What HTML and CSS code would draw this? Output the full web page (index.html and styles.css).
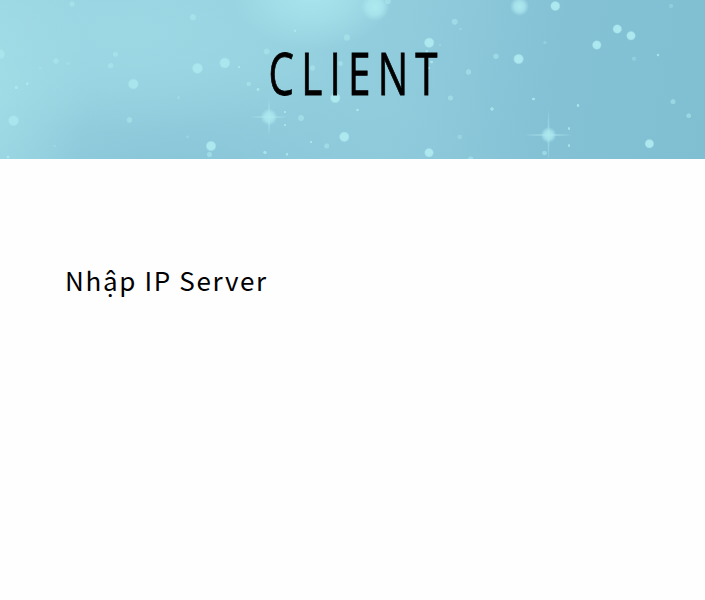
FILE: index.html
```html
<!DOCTYPE html>
<html lang="vi">
<head>
<meta charset="utf-8">
<title>Client</title>
<link rel="stylesheet" href="styles.css">
</head>
<body>
<header class="banner">
<svg class="sky" viewBox="0 0 705 159" aria-hidden="true">
  <defs>
    <radialGradient id="glow"><stop offset="0" stop-color="#ade9ef"/><stop offset=".55" stop-color="#ade9ef" stop-opacity=".75"/><stop offset="1" stop-color="#ade9ef" stop-opacity="0"/></radialGradient>
    <radialGradient id="dot"><stop offset="0" stop-color="#ade9ef"/><stop offset=".72" stop-color="#ade9ef" stop-opacity=".95"/><stop offset="1" stop-color="#ade9ef" stop-opacity="0"/></radialGradient>
    <radialGradient id="haze"><stop offset="0" stop-color="#a8e5ed"/><stop offset=".5" stop-color="#a8e5ed" stop-opacity=".6"/><stop offset="1" stop-color="#a8e5ed" stop-opacity="0"/></radialGradient>
  </defs>
  <ellipse cx="313" cy="-8" rx="82" ry="58" fill="url(#haze)"/>
  <g fill="url(#glow)">
    <circle cx="375" cy="7" r="14"/><circle cx="519.500" cy="6.500" r="9.500"/>
    <circle cx="269" cy="117" r="8.500"/><circle cx="548.500" cy="135" r="8"/>
  </g>
  <g fill="url(#glow)" opacity=".5">
    <ellipse cx="269" cy="117" rx="21" ry="1.300"/><ellipse cx="269" cy="117" rx="1.300" ry="21"/>
    <ellipse cx="548.500" cy="135" rx="26" ry="1.400"/><ellipse cx="548.500" cy="135" rx="1.400" ry="27"/>
  </g>
  <g fill="url(#dot)">
    <circle cx="0" cy="54" r="5.500" opacity=".7"/><circle cx="133.300" cy="84" r="5.700" opacity=".85"/>
    <circle cx="13.500" cy="120.700" r="5.800" opacity=".8"/><circle cx="197.500" cy="68.300" r="5.800" opacity=".9"/>
    <circle cx="224.800" cy="63" r="5.800" opacity=".9"/><circle cx="211" cy="146" r="5.500"/><circle cx="209.500" cy="154.500" r="3" opacity=".6"/>
    <circle cx="429.200" cy="42.700" r="5.500"/><circle cx="335.300" cy="98" r="5.500"/>
    <circle cx="344.300" cy="136.800" r="5.500"/><circle cx="429" cy="152.700" r="5"/>
    <circle cx="518.600" cy="59" r="5.500"/><circle cx="555.300" cy="6" r="5.300"/>
    <circle cx="617.300" cy="29" r="5"/><circle cx="631" cy="35.700" r="5"/><circle cx="596.800" cy="45" r="5"/><circle cx="649.400" cy="143.700" r="5"/>
  </g>
  <g fill="url(#dot)" opacity=".58">
    <circle cx="72" cy="4" r="3"/><circle cx="193" cy="17.300" r="3.700"/><circle cx="115.500" cy="54.300" r="3"/><circle cx="110.700" cy="65.700" r="3.200"/>
    <circle cx="56" cy="61" r="3.200"/><circle cx="129.500" cy="120" r="3.300"/><circle cx="388" cy="1.500" r="3.200"/>
    <circle cx="347" cy="37.500" r="3.700"/><circle cx="266.700" cy="51.500" r="3.500"/><circle cx="454.700" cy="21.700" r="3.500"/>
    <circle cx="312.500" cy="68" r="3.200"/><circle cx="340.500" cy="63.500" r="2.700"/><circle cx="248.700" cy="84" r="2.700"/>
    <circle cx="301" cy="118" r="3.500"/><circle cx="326.700" cy="146" r="3"/><circle cx="468.500" cy="72" r="3.200"/><circle cx="496" cy="56.300" r="3.200"/>
    <circle cx="450.500" cy="98" r="3"/><circle cx="459.700" cy="137" r="2.700" opacity=".7"/><circle cx="470.700" cy="159" r="3"/>
    <circle cx="544.500" cy="153" r="2.700"/><circle cx="671" cy="6" r="2.500" opacity=".6"/><circle cx="634" cy="58.700" r="2.500" opacity=".6"/>
    <circle cx="673" cy="101.700" r="3"/><circle cx="688.700" cy="115.700" r="2.800"/><circle cx="545" cy="42.700" r="2" opacity=".6"/>
    <circle cx="68" cy="63.500" r="2" opacity=".6"/><circle cx="40.500" cy="68" r="1.800" opacity=".6"/><circle cx="178.500" cy="97.700" r="2" opacity=".6"/>
    <circle cx="187.500" cy="136.700" r="1.600" opacity=".6"/><circle cx="54.500" cy="146" r="1.600" opacity=".6"/>
    <circle cx="460.500" cy="29" r="1.600" opacity=".6"/><circle cx="440" cy="45" r="1.600" opacity=".6"/>
  </g>
  <g fill="url(#dot)" opacity=".85">
    <circle cx="16.300" cy="87.500" r="2"/><circle cx="27.300" cy="83.700" r="1.700"/><circle cx="8" cy="157" r="1.800"/>
    <circle cx="239" cy="67" r="1.300"/><circle cx="295" cy="30.700" r="1.600"/><circle cx="258" cy="89.500" r="1.800"/>
    <circle cx="285" cy="112" r="1.600"/><circle cx="285" cy="125" r="1.600"/><circle cx="357.500" cy="110" r="1.600"/>
    <circle cx="311" cy="142" r="1.500"/><circle cx="265" cy="152.500" r="2"/><circle cx="287" cy="154.300" r="1.600"/>
    <circle cx="426.700" cy="51.300" r="1.500"/><circle cx="431.500" cy="62" r="1.700"/><circle cx="429" cy="68" r="1.600"/>
    <circle cx="492" cy="109" r="2"/><circle cx="533.500" cy="99" r="1.700"/><circle cx="578" cy="105.500" r="1.700"/>
    <circle cx="569" cy="128.500" r="1.500"/><circle cx="569" cy="145.500" r="1.500"/><circle cx="658" cy="55" r="1.700"/>
  </g>
</svg>
<h1 class="title">CLIENT</h1>
</header>
<main class="content">
<p class="label">Nhập IP Server</p>
</main>
</body>
</html>
```
FILE: styles.css
```css
body {
  margin: 0;
  min-height: 600px;
  background: #fefefe;
  color: #000;
}

.banner {
  position: relative;
  display: flex;
  justify-content: center;
  height: 159px;
  overflow: hidden;
  background:
    radial-gradient(ellipse 140px 170px at -50px 90px, #a3e0e8, #a3e0e800),
    radial-gradient(ellipse 240px 100px at 125px 32px, #9cd8e4, #9cd8e400),
    radial-gradient(ellipse 280px 110px at 180px 175px, #88c5d7, #88c5d700),
    linear-gradient(100deg, #98d3e1 0%, #95d0df 35%, #90ccdc 56%, #84c1d5 78%, #80bfd2 100%);
}

.sky {
  position: absolute;
  inset: 0;
  width: 705px;
  height: 159px;
}

.title {
  position: relative;
  flex: none;
  margin: 0;
  padding-top: 37px;
  font: 400 58.5px/70px "Open Sans", sans-serif;
  letter-spacing: 10.5px;
  text-indent: 10.5px;
  transform: scaleX(0.69);
  -webkit-text-stroke: 0.8px #000;
}

.content {
  padding: 102px 64px 0 65px;
}

.label {
  margin: 0;
  font: 400 26px/38px "Noto Sans CJK SC", sans-serif;
  letter-spacing: 1.65px;
}
```
